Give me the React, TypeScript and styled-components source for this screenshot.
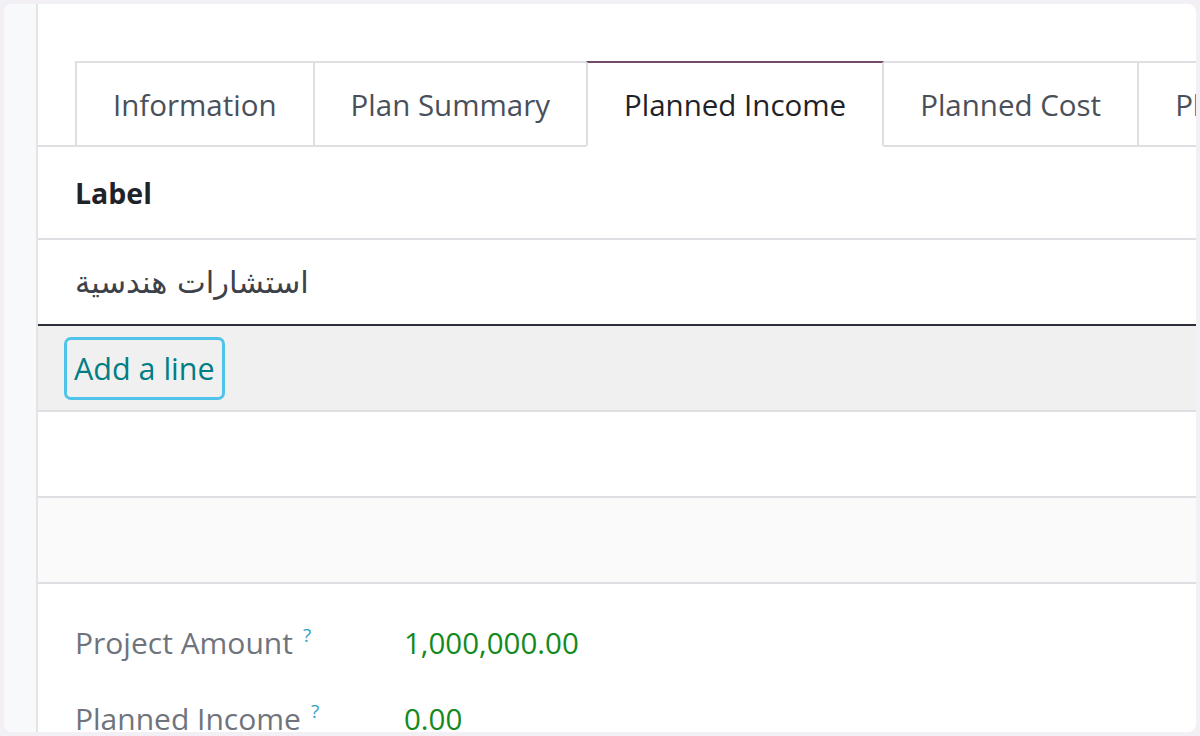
import styled, { createGlobalStyle } from "styled-components";

const FONT = `"Open Sans", "Noto Sans", "DejaVu Sans", sans-serif`;
const BORDER = "#dfdfe3";

const GlobalStyle = createGlobalStyle`
  html, body {
    margin: 0;
    padding: 0;
    background: #f2f0f5;
    font-family: ${FONT};
  }
  * {
    box-sizing: border-box;
  }
`;

const Frame = styled.div`
  width: 1200px;
  height: 736px;
  padding: 4px;
`;

const Card = styled.div`
  display: flex;
  height: 728px;
  border-radius: 8px;
  overflow: hidden;
  background: #fff;
`;

const SideStrip = styled.div`
  width: 34px;
  flex: none;
  background: #f8f9fb;
  border-right: 2px solid #e3e3e8;
`;

const Sheet = styled.main`
  flex: 1;
  min-width: 0;
  overflow: hidden;
  padding-top: 57px;
`;

const TabBar = styled.nav`
  display: flex;
  padding-left: 37px;
  border-bottom: 2px solid ${BORDER};
  white-space: nowrap;
`;

const Tab = styled.div<{ $active?: boolean }>`
  flex: none;
  height: 86px;
  margin-bottom: -2px;
  margin-right: -2px;
  padding: 0 36px;
  display: flex;
  align-items: center;
  font-size: 29.5px;
  color: ${(p) => (p.$active ? "#1f2329" : "#4a505a")};
  background: #fff;
  border: 2px solid ${BORDER};
  border-top-color: ${(p) => (p.$active ? "#714b67" : BORDER)};
  border-bottom-color: ${(p) => (p.$active ? "#fff" : BORDER)};
  position: relative;
  z-index: ${(p) => (p.$active ? 1 : 0)};
`;

const Row = styled.div<{ $bg?: string; $line?: string; $tall?: boolean }>`
  height: ${(p) => (p.$tall ? 93 : 86)}px;
  display: flex;
  align-items: center;
  padding-left: 37px;
  background: ${(p) => p.$bg || "#fff"};
  border-bottom: 2px solid ${(p) => p.$line || BORDER};
`;

const HeaderCell = styled.span`
  font-size: 28.5px;
  font-weight: 700;
  color: #1f2329;
`;

const Cell = styled.span`
  font-size: 30.5px;
  color: #3d424a;
  font-family: "DejaVu Sans", ${FONT};
`;

const AddLine = styled.button`
  margin-left: -11px;
  padding: 8px 7px;
  font-family: ${FONT};
  font-size: 30.5px;
  line-height: 41px;
  color: #017e84;
  background: transparent;
  border: 3px solid #4fc3ea;
  border-radius: 7px;
  cursor: pointer;
`;

const Fields = styled.section`
  display: grid;
  grid-template-columns: 329px auto;
  row-gap: 42px;
  padding: 42px 0 0 37px;
  align-items: center;
`;

const FieldLabel = styled.span`
  font-size: 30px;
  color: #6f747c;
  line-height: 34px;
  white-space: nowrap;
`;

const Help = styled.sup`
  font-size: 19px;
  line-height: 0;
  color: #3a9fc6;
  margin-left: 10px;
  vertical-align: 12px;
`;

const Amount = styled.span`
  font-size: 29.5px;
  color: #138a21;
  line-height: 34px;
`;

const tabs = [
  "Information",
  "Plan Summary",
  "Planned Income",
  "Planned Cost",
  "Planned Profit",
];

export default function App() {
  return (
    <>
      <GlobalStyle />
      <Frame>
        <Card>
          <SideStrip />
          <Sheet>
            <TabBar>
              {tabs.map((t) => (
                <Tab key={t} $active={t === "Planned Income"}>
                  {t}
                </Tab>
              ))}
            </TabBar>
            <Row $tall>
              <HeaderCell>Label</HeaderCell>
            </Row>
            <Row $line="#2a2f3a">
              <Cell>استشارات هندسية</Cell>
            </Row>
            <Row $bg="#f0f0f0">
              <AddLine>Add a line</AddLine>
            </Row>
            <Row />
            <Row $bg="#fafafa" />
            <Fields>
              <FieldLabel>
                Project Amount<Help>?</Help>
              </FieldLabel>
              <Amount>1,000,000.00</Amount>
              <FieldLabel>
                Planned Income<Help>?</Help>
              </FieldLabel>
              <Amount>0.00</Amount>
            </Fields>
          </Sheet>
        </Card>
      </Frame>
    </>
  );
}
